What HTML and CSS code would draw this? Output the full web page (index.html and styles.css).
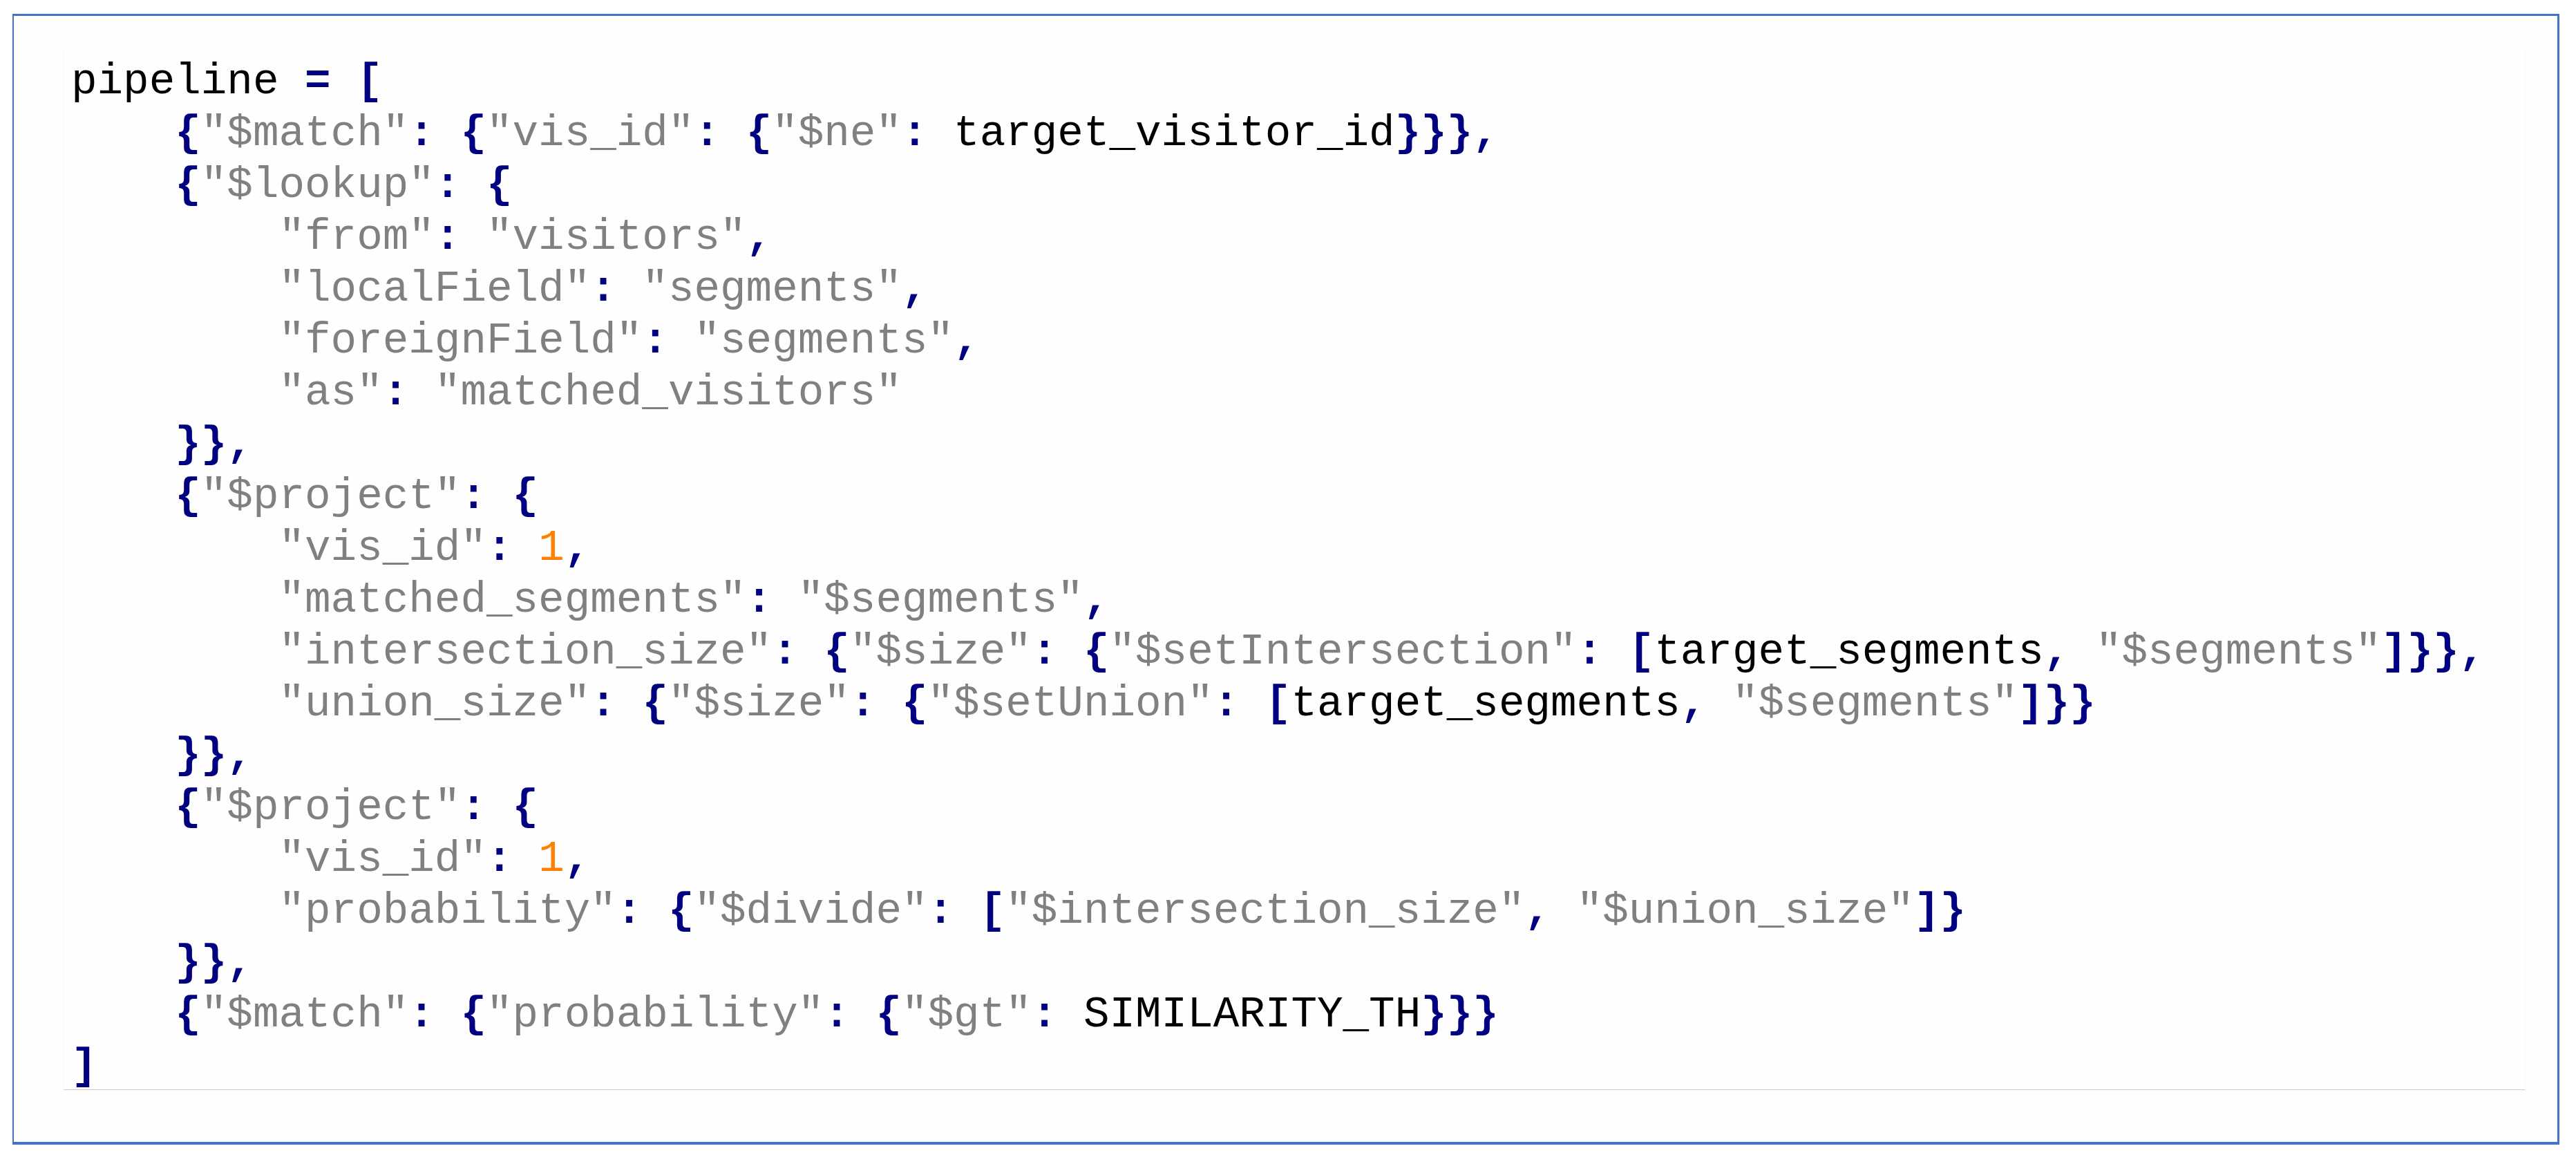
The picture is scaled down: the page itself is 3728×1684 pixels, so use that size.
FILE: index.html
```html
<!DOCTYPE html>
<html>
<head>
<meta charset="utf-8">
<title>pipeline</title>
<link rel="stylesheet" href="styles.css">
</head>
<body>
<div class="frame">
<pre class="code">pipeline <span class="o">= [</span>
    <span class="o">{</span><span class="s">"$match"</span><span class="o">:</span> <span class="o">{</span><span class="s">"vis_id"</span><span class="o">:</span> <span class="o">{</span><span class="s">"$ne"</span><span class="o">:</span> target_visitor_id<span class="o">}}},</span>
    <span class="o">{</span><span class="s">"$lookup"</span><span class="o">:</span> <span class="o">{</span>
        <span class="s">"from"</span><span class="o">:</span> <span class="s">"visitors"</span><span class="o">,</span>
        <span class="s">"localField"</span><span class="o">:</span> <span class="s">"segments"</span><span class="o">,</span>
        <span class="s">"foreignField"</span><span class="o">:</span> <span class="s">"segments"</span><span class="o">,</span>
        <span class="s">"as"</span><span class="o">:</span> <span class="s">"matched_visitors"</span>
    <span class="o">}},</span>
    <span class="o">{</span><span class="s">"$project"</span><span class="o">:</span> <span class="o">{</span>
        <span class="s">"vis_id"</span><span class="o">:</span> <span class="n">1</span><span class="o">,</span>
        <span class="s">"matched_segments"</span><span class="o">:</span> <span class="s">"$segments"</span><span class="o">,</span>
        <span class="s">"intersection_size"</span><span class="o">:</span> <span class="o">{</span><span class="s">"$size"</span><span class="o">:</span> <span class="o">{</span><span class="s">"$setIntersection"</span><span class="o">:</span> <span class="o">[</span>target_segments<span class="o">,</span> <span class="s">"$segments"</span><span class="o">]}},</span>
        <span class="s">"union_size"</span><span class="o">:</span> <span class="o">{</span><span class="s">"$size"</span><span class="o">:</span> <span class="o">{</span><span class="s">"$setUnion"</span><span class="o">:</span> <span class="o">[</span>target_segments<span class="o">,</span> <span class="s">"$segments"</span><span class="o">]}}</span>
    <span class="o">}},</span>
    <span class="o">{</span><span class="s">"$project"</span><span class="o">:</span> <span class="o">{</span>
        <span class="s">"vis_id"</span><span class="o">:</span> <span class="n">1</span><span class="o">,</span>
        <span class="s">"probability"</span><span class="o">:</span> <span class="o">{</span><span class="s">"$divide"</span><span class="o">:</span> <span class="o">[</span><span class="s">"$intersection_size"</span><span class="o">,</span> <span class="s">"$union_size"</span><span class="o">]}</span>
    <span class="o">}},</span>
    <span class="o">{</span><span class="s">"$match"</span><span class="o">:</span> <span class="o">{</span><span class="s">"probability"</span><span class="o">:</span> <span class="o">{</span><span class="s">"$gt"</span><span class="o">:</span> SIMILARITY_TH<span class="o">}}}</span>
<span class="o">]</span></pre>
</div>
</body>
</html>
```
FILE: styles.css
```css
html, body {
  margin: 0;
  padding: 0;
  background: #ffffff;
}

.frame {
  box-sizing: border-box;
  margin: 20px 0 0 18px;
  width: 3686px;
  height: 1636px;
  border-style: solid;
  border-color: #4472c4;
  border-width: 3px 3px 4px 2px;
  padding: 52px 0 0 72px;
  background: #fefefe;
}

.code {
  box-sizing: border-box;
  margin: 0;
  width: 3563px;
  height: 1502px;
  padding: 6px 0 0 10px;
  border-left: 1px solid #f6f6f6;
  border-right: 1px solid #f6f6f6;
  border-bottom: 1px solid #cccccc;
  font-family: "Liberation Mono", "Courier New", monospace;
  font-size: 62.6px;
  line-height: 75px;
  color: #000000;
  white-space: pre;
}

.o {
  color: #000080;
  font-weight: bold;
}

.s {
  color: #808080;
}

.n {
  color: #ff8000;
}
```
